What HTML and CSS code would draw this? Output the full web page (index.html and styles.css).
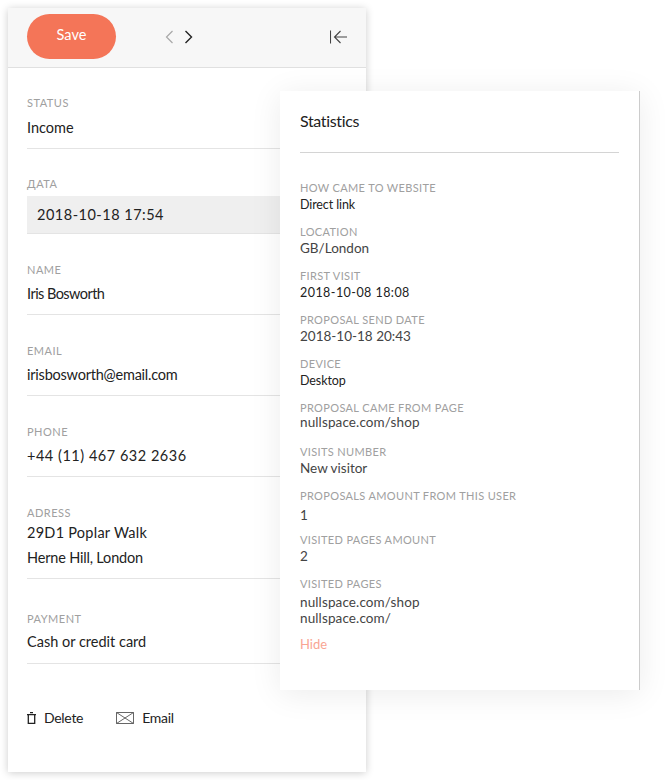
FILE: index.html
```html
<!DOCTYPE html>
<html lang="en">
<head>
<meta charset="utf-8">
<title>Proposal</title>
<link rel="stylesheet" href="styles.css">
</head>
<body>
<main class="card">
  <header class="toolbar">
    <button class="save">Save</button>
    <nav class="pager">
      <svg width="9" height="14" viewBox="0 0 9 14"><path d="M7.500 1 1.500 7l6 6" fill="none" stroke="#a8a8a8" stroke-width="1.200"/></svg>
      <svg width="9" height="14" viewBox="0 0 9 14"><path d="M1.500 1l6 6-6 6" fill="none" stroke="#222" stroke-width="1.400"/></svg>
    </nav>
    <svg class="collapse" width="17" height="14" viewBox="0 0 17 14"><path d="M.5.500v13M17 7H4.500M10.500 1l-6 6 6 6" fill="none" stroke="#444" stroke-width="1.100"/></svg>
  </header>
  <section class="fields">
    <div class="field"><div class="label">STATUS</div><div class="value">Income</div></div>
    <div class="field"><div class="label">ДАТА</div><div class="value date">2018-10-18 17:54</div></div>
    <div class="field low"><div class="label">NAME</div><div class="value narrow">Iris Bosworth</div></div>
    <div class="field low"><div class="label">EMAIL</div><div class="value email">irisbosworth@email.com</div></div>
    <div class="field low"><div class="label">PHONE</div><div class="value phone">+44 (11) 467 632 2636</div></div>
    <div class="field low address"><div class="label">ADRESS</div><div class="value"><span class="street">29D1 Poplar Walk</span><br><span class="area">Herne Hill, London</span></div></div>
    <div class="field pay"><div class="label">PAYMENT</div><div class="value">Cash or credit card</div></div>
  </section>
  <footer class="actions">
    <a class="action">
      <svg width="10" height="12" viewBox="0 0 10 12"><path d="M3 .6h3M0 2.700h9M1.300 2.700v8.700h6.400V2.700" fill="none" stroke="#222" stroke-width="1.300"/></svg>
      <span>Delete</span>
    </a>
    <a class="action mail">
      <svg width="18" height="12" viewBox="0 0 18 12"><path d="M.5.500h17v11H.5zM.5.500 17.500 11.500M17.500.500.500 11.500" fill="none" stroke="#555" stroke-width=".9"/></svg>
      <span>Email</span>
    </a>
  </footer>
</main>
<aside class="stats">
  <h2 class="stats-title">Statistics</h2>
  <div class="stat"><div class="stat-label">HOW CAME TO WEBSITE</div><div class="stat-value small">Direct link</div></div>
  <div class="stat"><div class="stat-label">LOCATION</div><div class="stat-value">GB/London</div></div>
  <div class="stat"><div class="stat-label">FIRST VISIT</div><div class="stat-value small digits">2018-10-08 18:08</div></div>
  <div class="stat"><div class="stat-label">PROPOSAL SEND DATE</div><div class="stat-value">2018-10-18 20:43</div></div>
  <div class="stat"><div class="stat-label">DEVICE</div><div class="stat-value small">Desktop</div></div>
  <div class="stat"><div class="stat-label">PROPOSAL CAME FROM PAGE</div><div class="stat-value tight">nullspace.com/shop</div></div>
  <div class="stat"><div class="stat-label">VISITS NUMBER</div><div class="stat-value">New visitor</div></div>
  <div class="stat"><div class="stat-label">PROPOSALS AMOUNT FROM THIS USER</div><div class="stat-value drop">1</div></div>
  <div class="stat"><div class="stat-label">VISITED PAGES AMOUNT</div><div class="stat-value">2</div></div>
  <div class="stat pages"><div class="stat-label">VISITED PAGES</div><div class="stat-value lines">nullspace.com/shop<br>nullspace.com/</div></div>
  <a class="hide">Hide</a>
</aside>
</body>
</html>
```
FILE: styles.css
```css
* { box-sizing: border-box; }
html, body { margin: 0; padding: 0; background: #fff; }
body { font-family: "Lato", "Liberation Sans", sans-serif; color: #222; position: relative; height: 780px; overflow: hidden; }
.card { width: 358px; height: 764px; margin: 8px 0 0 8px; background: #fff; box-shadow: 0 1px 8px rgba(0,0,0,.2); display: flex; flex-direction: column; }
.toolbar { height: 60px; background: #f7f7f7; border-bottom: 1px solid #e0e0e0; display: flex; align-items: flex-start; padding: 6px 19px; flex: none; }
.save { width: 89px; height: 45px; border: 0; border-radius: 23px; background: #f47558; color: #fff; font: 400 14.5px/41px "Lato", sans-serif; padding: 0 0 4px; }
.pager { display: flex; gap: 10px; margin: 16px 0 0 49px; }
.collapse { margin: 16px 0 0 auto; }
.fields { padding: 0 19px; position: relative; }
.field { padding-top: 28px; border-bottom: 1px solid #e4e4e4; }
.label { font-size: 11px; line-height: 14px; letter-spacing: .5px; color: #a0a0a0; }
.value { font-size: 14.5px; line-height: 25px; margin-top: 5px; padding-bottom: 8px; color: #222; }
.date { background: #efefef; height: 37px; padding: 6px 0 0 10px; letter-spacing: .5px; }
.low { padding-top: 29px; }
.low .value { margin-top: 4px; }
.narrow { letter-spacing: -.55px; }
.email { letter-spacing: -.22px; }
.phone { letter-spacing: .52px; }
.low.address .value { margin-top: 0; padding-bottom: 8px; }
.street { letter-spacing: .26px; }
.area { letter-spacing: -.18px; }
.pay { padding-top: 33px; }
.pay .value { margin-top: 3px; padding-bottom: 9px; }
.actions { display: flex; gap: 33px; padding: 42px 19px 0; }
.action { display: flex; align-items: center; gap: 7px; font-size: 14px; line-height: 24px; letter-spacing: -.3px; color: #222; }
.mail { gap: 8px; }
.stats { position: absolute; left: 280px; top: 91px; width: 360px; height: 599px; background: #fff; border-right: 1px solid #ccc; padding: 0 20px; box-shadow: 0 4px 30px rgba(0,0,0,.08); }
.stats-title { margin: 0 0 28px; height: 62px; font-size: 16px; font-weight: 400; line-height: 60px; letter-spacing: -.35px; color: #222; border-bottom: 1px solid #d4d4d4; }
.stat { height: 44px; }
.stat-label { font-size: 11px; line-height: 14px; letter-spacing: .35px; color: #a0a0a0; }
.stat-value { font-size: 13.5px; line-height: 18px; color: #444; }
.small { font-size: 12.5px; margin-top: 1px; letter-spacing: -.1px; color: #222; }
.digits { letter-spacing: .45px; }
.tight { margin-top: -2px; letter-spacing: .12px; }
.drop { margin-top: 3px; }
.lines { line-height: 16px; margin-top: 3px; letter-spacing: .12px; }
.pages { height: 58px; }
.hide { display: block; font-size: 13px; line-height: 18px; color: #f9a593; }
```
